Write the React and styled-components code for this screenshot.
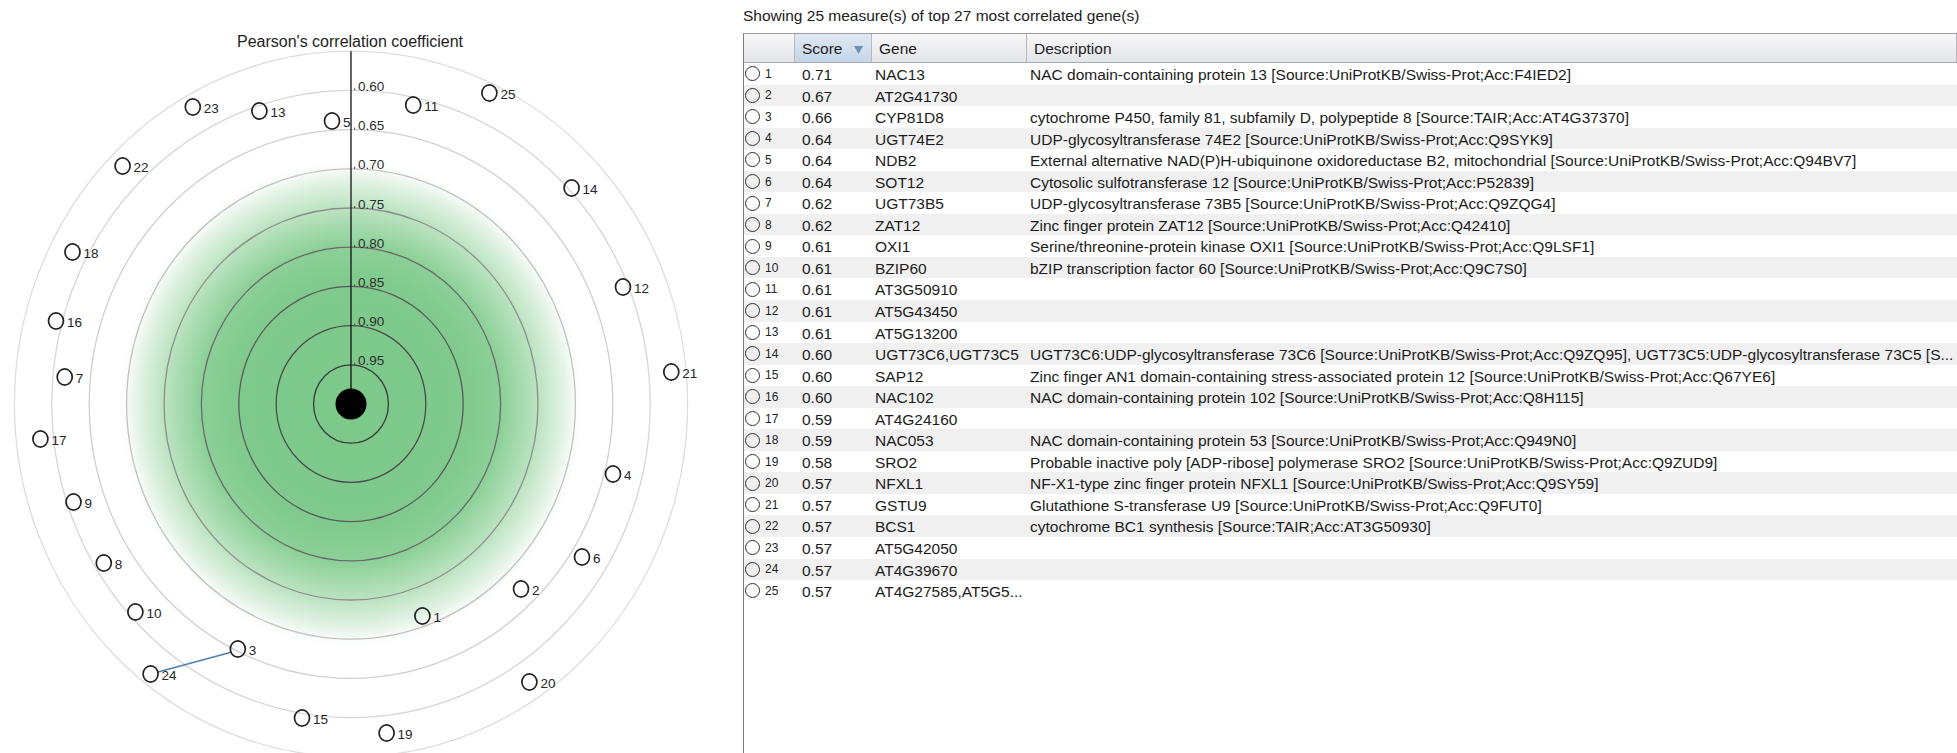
import React from "react";
import styled, { createGlobalStyle } from "styled-components";

const GlobalStyle = createGlobalStyle`
  html, body {
    margin: 0;
    padding: 0;
    background: #ffffff;
    overflow: hidden;
  }
  body {
    font-family: "Liberation Sans", Arial, sans-serif;
  }
`;

/* ---------- radar chart geometry ---------- */
const CX = 351;
const CY = 404;
const RX = 37.4; // horizontal step between rings (0.05 of correlation)
const RY = 39.2; // vertical step between rings

const ringStroke = {
  1: "#3c3c3c",
  2: "#4c4c4c",
  3: "#5a5a5a",
  4: "#6a6a6a",
  5: "#8e8e8e",
  6: "#c2c2c2",
  7: "#d0d0d0",
  8: "#d6d6d6",
  9: "#dddddd",
};

const markers = [
  [23, 192.8, 107],
  [13, 259.4, 111],
  [5, 332, 121],
  [11, 413.2, 105],
  [25, 489.4, 93],
  [22, 122.6, 166],
  [14, 571.6, 188],
  [18, 72.5, 252],
  [12, 623, 287],
  [16, 56, 321],
  [21, 671.3, 372],
  [7, 64.7, 377],
  [17, 40.4, 439],
  [4, 613, 474],
  [9, 73.5, 502],
  [6, 582, 557],
  [8, 103.8, 563],
  [2, 521, 589],
  [1, 422.4, 616],
  [10, 135.4, 612],
  [3, 237.8, 649],
  [24, 150.6, 674],
  [20, 529.4, 682],
  [15, 302, 718],
  [19, 386.6, 733],
];

/* ---------- table data ---------- */
const rows = [
  ["0.71", "NAC13", "NAC domain-containing protein 13 [Source:UniProtKB/Swiss-Prot;Acc:F4IED2]"],
  ["0.67", "AT2G41730", ""],
  ["0.66", "CYP81D8", "cytochrome P450, family 81, subfamily D, polypeptide 8 [Source:TAIR;Acc:AT4G37370]"],
  ["0.64", "UGT74E2", "UDP-glycosyltransferase 74E2 [Source:UniProtKB/Swiss-Prot;Acc:Q9SYK9]"],
  ["0.64", "NDB2", "External alternative NAD(P)H-ubiquinone oxidoreductase B2, mitochondrial [Source:UniProtKB/Swiss-Prot;Acc:Q94BV7]"],
  ["0.64", "SOT12", "Cytosolic sulfotransferase 12 [Source:UniProtKB/Swiss-Prot;Acc:P52839]"],
  ["0.62", "UGT73B5", "UDP-glycosyltransferase 73B5 [Source:UniProtKB/Swiss-Prot;Acc:Q9ZQG4]"],
  ["0.62", "ZAT12", "Zinc finger protein ZAT12 [Source:UniProtKB/Swiss-Prot;Acc:Q42410]"],
  ["0.61", "OXI1", "Serine/threonine-protein kinase OXI1 [Source:UniProtKB/Swiss-Prot;Acc:Q9LSF1]"],
  ["0.61", "BZIP60", "bZIP transcription factor 60 [Source:UniProtKB/Swiss-Prot;Acc:Q9C7S0]"],
  ["0.61", "AT3G50910", ""],
  ["0.61", "AT5G43450", ""],
  ["0.61", "AT5G13200", ""],
  ["0.60", "UGT73C6,UGT73C5", "UGT73C6:UDP-glycosyltransferase 73C6 [Source:UniProtKB/Swiss-Prot;Acc:Q9ZQ95], UGT73C5:UDP-glycosyltransferase 73C5 [S..."],
  ["0.60", "SAP12", "Zinc finger AN1 domain-containing stress-associated protein 12 [Source:UniProtKB/Swiss-Prot;Acc:Q67YE6]"],
  ["0.60", "NAC102", "NAC domain-containing protein 102 [Source:UniProtKB/Swiss-Prot;Acc:Q8H115]"],
  ["0.59", "AT4G24160", ""],
  ["0.59", "NAC053", "NAC domain-containing protein 53 [Source:UniProtKB/Swiss-Prot;Acc:Q949N0]"],
  ["0.58", "SRO2", "Probable inactive poly [ADP-ribose] polymerase SRO2 [Source:UniProtKB/Swiss-Prot;Acc:Q9ZUD9]"],
  ["0.57", "NFXL1", "NF-X1-type zinc finger protein NFXL1 [Source:UniProtKB/Swiss-Prot;Acc:Q9SY59]"],
  ["0.57", "GSTU9", "Glutathione S-transferase U9 [Source:UniProtKB/Swiss-Prot;Acc:Q9FUT0]"],
  ["0.57", "BCS1", "cytochrome BC1 synthesis [Source:TAIR;Acc:AT3G50930]"],
  ["0.57", "AT5G42050", ""],
  ["0.57", "AT4G39670", ""],
  ["0.57", "AT4G27585,AT5G5...", ""],
];

/* ---------- layout ---------- */
const Page = styled.div`
  display: flex;
  width: 1957px;
  height: 753px;
  overflow: hidden;
`;

const ChartPane = styled.div`
  flex: 0 0 743px;
  height: 100%;
`;

const ChartSvg = styled.svg`
  display: block;
  font-family: "Liberation Sans", Arial, sans-serif;
`;

const TablePane = styled.div`
  flex: 1;
  min-width: 0;
  display: flex;
  flex-direction: column;
`;

const Caption = styled.div`
  box-sizing: border-box;
  height: 33px;
  padding-top: 7px;
  font-size: 15.5px;
  line-height: 18px;
  color: #202020;
  white-space: nowrap;
`;

const Grid = styled.div`
  flex: 1;
  min-height: 0;
  border-left: 1px solid #7d7d7d;
  border-top: 1px solid #9c9c9c;
  overflow: hidden;
  font-size: 15.5px;
  color: #1c1c1c;
`;

const columns = "51px 77px 155px 1fr";

const HeaderRow = styled.div`
  display: grid;
  grid-template-columns: ${columns};
  height: 29px;
  box-sizing: border-box;
  border-bottom: 1px solid #a9a9ad;
`;

const HeaderCell = styled.div`
  box-sizing: border-box;
  display: flex;
  align-items: flex-start;
  justify-content: space-between;
  padding: 2px 8px 0 7px;
  line-height: 26px;
  white-space: nowrap;
  overflow: hidden;
  color: #1e1e1e;
  border-right: 1px solid #b6b6bb;
  background: ${(p) =>
    p.$active
      ? "linear-gradient(#dfe9f3, #c4d6e8)"
      : "linear-gradient(#f7f7f9, #e4e5e9)"};
`;

const SortArrow = styled.svg`
  margin-top: 10px;
  flex: none;
`;

const Row = styled.div`
  display: grid;
  grid-template-columns: ${columns};
  height: 21.56px;
  background: ${(p) => (p.$striped ? "#f0f0f0" : "#ffffff")};
`;

const Cell = styled.div`
  padding: 2px 0 0 ${(p) => p.$inset || 3}px;
  line-height: 19.56px;
  white-space: nowrap;
  overflow: hidden;
`;

const RadioCell = styled.div`
  display: flex;
  align-items: center;
  gap: 5px;
  padding-left: 1px;
`;

const RadioDot = styled.span`
  box-sizing: border-box;
  width: 15px;
  height: 15px;
  border-radius: 50%;
  border: 1.6px solid #303030;
  background: transparent;
  flex: none;
`;

const RowNumber = styled.span`
  font-size: 12px;
  color: #222222;
`;

/* ---------- chart ---------- */
function CorrelationRadar() {
  const rings = [9, 8, 7, 6, 5, 4, 3, 2, 1];
  const ticks = [8, 7, 6, 5, 4, 3, 2, 1];
  return (
    <ChartSvg width="743" height="753" viewBox="0 0 743 753">
      <defs>
        <radialGradient id="glow" cx="50%" cy="50%" r="50%">
          <stop offset="0" stopColor="#7cc98a" />
          <stop offset="0.5" stopColor="#7fca8c" />
          <stop offset="0.64" stopColor="#8cd098" />
          <stop offset="0.8" stopColor="#bde4c2" />
          <stop offset="0.92" stopColor="#e8f5ea" />
          <stop offset="1" stopColor="#ffffff" stopOpacity="0" />
        </radialGradient>
      </defs>

      <ellipse cx={CX} cy={CY} rx={RX * 6.3} ry={RY * 6.3} fill="url(#glow)" />

      {rings.map((k) => (
        <ellipse
          key={k}
          cx={CX}
          cy={CY}
          rx={RX * k}
          ry={RY * k}
          fill="none"
          stroke={ringStroke[k]}
          strokeWidth="1.3"
        />
      ))}

      <line
        x1="232"
        y1="652"
        x2="158"
        y2="672"
        stroke="#4f7fae"
        strokeWidth="1.5"
      />

      {markers.map(([n, x, y]) => (
        <g key={n}>
          <ellipse cx={x} cy={y} rx="7.5" ry="8.2" fill="none" stroke="#222" strokeWidth="1.7" />
          <text x={x + 11} y={y + 6} fontSize="13.5" fill="#262626">
            {n}
          </text>
        </g>
      ))}

      <line x1={CX} y1={CY - RY * 9} x2={CX} y2={CY} stroke="#111" strokeWidth="1.3" />

      {ticks.map((k) => (
        <g key={k}>
          <rect x={CX + 3} y={CY - RY * k - 2} width="1.2" height="2" fill="#555" />
          <text x={CX + 7} y={CY - RY * k + 0.5} fontSize="13.5" fill="#2e2e2e">
            {(1 - k * 0.05).toFixed(2)}
          </text>
        </g>
      ))}

      <circle cx={CX} cy={CY} r="15.5" fill="#000" />

      <text x="350" y="46.5" fontSize="16" textAnchor="middle" fill="#1e1e1e">
        Pearson's correlation coefficient
      </text>
    </ChartSvg>
  );
}

/* ---------- table ---------- */
function CorrelatedGenes() {
  return (
    <TablePane>
      <Caption>Showing 25 measure(s) of top 27 most correlated gene(s)</Caption>
      <Grid>
        <HeaderRow>
          <HeaderCell />
          <HeaderCell $active>
            <span>Score</span>
            <SortArrow width="9" height="8" viewBox="0 0 9 8">
              <polygon points="0,0 9,0 4.5,8" fill="#6d8fb4" />
            </SortArrow>
          </HeaderCell>
          <HeaderCell>Gene</HeaderCell>
          <HeaderCell>Description</HeaderCell>
        </HeaderRow>
        {rows.map(([score, gene, desc], i) => (
          <Row key={i} $striped={i % 2 === 1}>
            <RadioCell>
              <RadioDot />
              <RowNumber>{i + 1}</RowNumber>
            </RadioCell>
            <Cell $inset={7}>{score}</Cell>
            <Cell>{gene}</Cell>
            <Cell>{desc}</Cell>
          </Row>
        ))}
      </Grid>
    </TablePane>
  );
}

export default function App() {
  return (
    <>
      <GlobalStyle />
      <Page>
        <ChartPane>
          <CorrelationRadar />
        </ChartPane>
        <CorrelatedGenes />
      </Page>
    </>
  );
}
